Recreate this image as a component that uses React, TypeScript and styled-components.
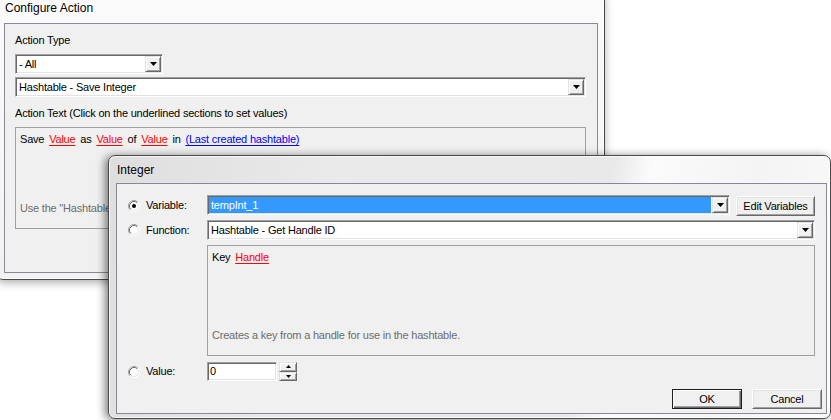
import React from 'react';
import styled, { createGlobalStyle } from 'styled-components';

const GlobalStyle = createGlobalStyle`
  html, body { margin: 0; padding: 0; background: #ffffff; }
  body {
    width: 831px;
    height: 420px;
    overflow: hidden;
    font-family: "Liberation Sans", Arial, sans-serif;
  }
`;

const Desktop = styled.div`
  position: relative;
  width: 831px;
  height: 420px;
  overflow: hidden;
  background: #ffffff;
`;

const Window = styled.div<{ $left: number; $top: number; $width: number; $height: number; $front?: boolean }>`
  position: absolute;
  left: ${p => p.$left}px;
  top: ${p => p.$top}px;
  width: ${p => p.$width}px;
  height: ${p => p.$height}px;
  box-sizing: border-box;
  display: flex;
  flex-direction: column;
  border: 1px solid #4a4a4a;
  border-radius: 7px;
  z-index: ${p => (p.$front ? 2 : 1)};
  background: ${p =>
    p.$front
      ? 'linear-gradient(100deg, #dedede 0%, #eaeaea 30%, #e9e9e9 66%, #fbfbfb 71%, #f4f4f4 85%, #fafafa 100%)'
      : 'linear-gradient(180deg, #fbfbfb 0%, #f6f6f6 60%, #f2f2f2 100%)'};
  box-shadow: ${p =>
    p.$front
      ? '-3px 1px 9px rgba(0,0,0,0.5), inset 0 0 0 1px rgba(255,255,255,0.75)'
      : '0 3px 8px rgba(0,0,0,0.3), inset 0 0 0 1px rgba(255,255,255,0.75)'};
`;

const TitleBar = styled.div<{ $height: number; $padTop: number }>`
  flex: none;
  box-sizing: border-box;
  height: ${p => p.$height}px;
  padding: ${p => p.$padTop}px 0 0 8px;
  font-size: 12px;
  line-height: 15px;
  color: #000;
`;

const Client = styled.div<{ $margin: string; $padding: string }>`
  flex: 1;
  display: flex;
  flex-direction: column;
  box-sizing: border-box;
  margin: ${p => p.$margin};
  padding: ${p => p.$padding};
  background: #f0f0f0;
  border: 1px solid #878a92;
  font-size: 11px;
  letter-spacing: -0.2px;
  color: #000;
`;

const Label = styled.div<{ $mt?: number }>`
  line-height: 13px;
  height: 13px;
  margin-top: ${p => p.$mt ?? 0}px;
  white-space: nowrap;
`;

const Combo = styled.div<{ $width?: number; $mt?: number; $grow?: boolean }>`
  box-sizing: border-box;
  display: flex;
  height: 20px;
  width: ${p => (p.$width ? `${p.$width}px` : 'auto')};
  flex: ${p => (p.$grow ? '1 1 0' : 'none')};
  margin-top: ${p => p.$mt ?? 0}px;
  padding: 1px;
  background: #ffffff;
  border: 1px solid;
  border-color: #a0a0a0 #ffffff #ffffff #a0a0a0;
  box-shadow: inset 1px 1px 0 #696969, inset -1px -1px 0 #e3e3e3;
`;

const ComboText = styled.div<{ $selected?: boolean }>`
  flex: 1;
  line-height: 16px;
  padding-left: 2px;
  margin-right: 1px;
  white-space: nowrap;
  overflow: hidden;
  background: ${p => (p.$selected ? '#3399ff' : 'transparent')};
  color: ${p => (p.$selected ? '#ffffff' : '#000000')};
`;

const RaisedBox = styled.div`
  box-sizing: border-box;
  display: flex;
  align-items: center;
  justify-content: center;
  background: #f0f0f0;
  border: 1px solid;
  border-color: #e3e3e3 #696969 #696969 #e3e3e3;
  box-shadow: inset 1px 1px 0 #ffffff, inset -1px -1px 0 #a0a0a0;
`;

const DropButton = styled(RaisedBox)`
  width: 16px;
  height: 16px;
  flex: none;
`;

const PushButton = styled.div<{ $width: number; $default?: boolean; $mt?: number }>`
  box-sizing: border-box;
  flex: none;
  width: ${p => p.$width}px;
  height: 20px;
  margin-top: ${p => p.$mt ?? 0}px;
  display: flex;
  align-items: center;
  justify-content: center;
  background: #f0f0f0;
  line-height: 13px;
  white-space: nowrap;
  border: 1px solid;
  border-color: ${p => (p.$default ? '#1e1e1e' : '#ffffff #696969 #696969 #ffffff')};
  box-shadow: ${p =>
    p.$default
      ? 'inset 1px 1px 0 #ffffff, inset -1px -1px 0 #696969, inset -2px -2px 0 #a0a0a0'
      : 'inset 1px 1px 0 #e3e3e3, inset -1px -1px 0 #a0a0a0'};
`;

const Panel = styled.div<{ $height: number; $mt?: number }>`
  box-sizing: border-box;
  height: ${p => p.$height}px;
  margin-top: ${p => p.$mt ?? 0}px;
  border: 1px solid #a0a0a0;
  padding: 5px 4px 13px 4px;
  display: flex;
  flex-direction: column;
  justify-content: space-between;
  white-space: nowrap;
  overflow: hidden;
`;

const PhraseLine = styled.div`
  line-height: 13px;
  word-spacing: 2px;
  white-space: pre;
`;

const HelpText = styled.div`
  line-height: 13px;
  color: #6d6d6d;
`;

const Param = styled.span<{ $kind: 'value' | 'preset' }>`
  color: ${p => (p.$kind === 'value' ? '#ff0000' : '#0000ff')};
  text-decoration: underline;
  text-underline-offset: 2px;
  word-spacing: 0;
`;

const Form = styled.div`
  display: flex;
  flex-direction: column;
  margin-right: 7px;
`;

const FormRow = styled.div<{ $height: number; $mt?: number }>`
  display: grid;
  grid-template-columns: 79px 1fr;
  height: ${p => p.$height}px;
  margin-top: ${p => p.$mt ?? 0}px;
`;

const RadioCell = styled.label`
  display: flex;
  align-items: center;
  gap: 6px;
  line-height: 13px;
`;

const ControlCell = styled.div`
  display: flex;
  align-items: flex-start;
  gap: 6px;
`;

const SpinField = styled.div`
  box-sizing: border-box;
  width: 70px;
  height: 19px;
  padding: 1px 2px;
  line-height: 15px;
  background: #ffffff;
  border: 1px solid;
  border-color: #a0a0a0 #ffffff #ffffff #a0a0a0;
  box-shadow: inset 1px 1px 0 #696969, inset -1px -1px 0 #e3e3e3;
`;

const SpinButtons = styled.div`
  display: flex;
  flex-direction: column;
  width: 18px;
  height: 19px;
  margin-left: -4px;
`;

const SpinButton = styled(RaisedBox)`
  flex: 1;
`;

const ButtonBar = styled.div`
  display: flex;
  justify-content: flex-end;
  gap: 10px;
  margin-top: 8px;
`;

const Radio = ({ checked }: { checked?: boolean }) => (
  <svg width="12" height="12" viewBox="0 0 12 12" style={{ flex: 'none' }}>
    <circle cx="6" cy="6" r="5.5" fill="#ffffff" />
    <path d="M2.11 9.89 A5.5 5.5 0 0 1 9.89 2.11" fill="none" stroke="#a0a0a0" strokeWidth="1" />
    <path d="M9.89 2.11 A5.5 5.5 0 0 1 2.11 9.89" fill="none" stroke="#ffffff" strokeWidth="1" />
    <path d="M2.82 9.18 A4.5 4.5 0 0 1 9.18 2.82" fill="none" stroke="#696969" strokeWidth="1" />
    <path d="M9.18 2.82 A4.5 4.5 0 0 1 2.82 9.18" fill="none" stroke="#e3e3e3" strokeWidth="1" />
    {checked && <circle cx="6" cy="6" r="2" fill="#000000" />}
  </svg>
);

const DownArrow = () => (
  <svg width="7" height="4" viewBox="0 0 7 4">
    <path d="M0 0H7L3.5 4Z" fill="#000000" />
  </svg>
);

const TinyArrow = ({ up }: { up?: boolean }) => (
  <svg width="5" height="3" viewBox="0 0 5 3">
    <path d={up ? 'M2.5 0L5 3H0Z' : 'M0 0H5L2.5 3Z'} fill="#000000" />
  </svg>
);

const ComboBox = ({
  text,
  width,
  mt,
  selected,
  grow,
}: {
  text: string;
  width?: number;
  mt?: number;
  selected?: boolean;
  grow?: boolean;
}) => (
  <Combo $width={width} $mt={mt} $grow={grow}>
    <ComboText $selected={selected}>{text}</ComboText>
    <DropButton>
      <DownArrow />
    </DropButton>
  </Combo>
);

export default function App() {
  return (
    <Desktop>
      <GlobalStyle />
      <Window $left={-4} $top={-10} $width={609} $height={290}>
        <TitleBar $height={32} $padTop={10}>Configure Action</TitleBar>
        <Client $margin="0 6px 6px 7px" $padding="10px 11px 0 10px">
          <Label>Action Type</Label>
          <ComboBox text="- All" width={148} mt={7} />
          <ComboBox text="Hashtable - Save Integer" mt={3} />
          <Label $mt={10}>Action Text (Click on the underlined sections to set values)</Label>
          <Panel $height={102} $mt={7}>
            <PhraseLine>
              {'Save '}
              <Param $kind="value">Value</Param>
              {' as '}
              <Param $kind="value">Value</Param>
              {' of '}
              <Param $kind="value">Value</Param>
              {' in '}
              <Param $kind="preset">(Last created hashtable)</Param>
            </PhraseLine>
            <HelpText>Use the "Hashtable - Get Handle ID" function to get a key for a handle.</HelpText>
          </Panel>
        </Client>
      </Window>

      <Window $left={108} $top={155} $width={723} $height={264} $front>
        <TitleBar $height={27} $padTop={7}>Integer</TitleBar>
        <Client $margin="0 3px 4px 7px" $padding="11px 4px 4px 11px">
          <Form>
            <FormRow $height={21}>
              <RadioCell>
                <Radio checked />
                Variable:
              </RadioCell>
              <ControlCell>
                <ComboBox text="tempInt_1" selected grow />
                <PushButton $width={79} $mt={1}>Edit Variables</PushButton>
              </ControlCell>
            </FormRow>
            <FormRow $height={20} $mt={4}>
              <RadioCell>
                <Radio />
                Function:
              </RadioCell>
              <ControlCell>
                <ComboBox text="Hashtable - Get Handle ID" grow />
              </ControlCell>
            </FormRow>
            <FormRow $height={111} $mt={5}>
              <span />
              <Panel $height={111}>
                <PhraseLine>
                  {'Key '}
                  <Param $kind="value">Handle</Param>
                </PhraseLine>
                <HelpText>Creates a key from a handle for use in the hashtable.</HelpText>
              </Panel>
            </FormRow>
            <FormRow $height={19} $mt={6}>
              <RadioCell>
                <Radio />
                Value:
              </RadioCell>
              <ControlCell>
                <SpinField>0</SpinField>
                <SpinButtons>
                  <SpinButton>
                    <TinyArrow up />
                  </SpinButton>
                  <SpinButton>
                    <TinyArrow />
                  </SpinButton>
                </SpinButtons>
              </ControlCell>
            </FormRow>
          </Form>
          <ButtonBar>
            <PushButton $width={70} $default>OK</PushButton>
            <PushButton $width={70}>Cancel</PushButton>
          </ButtonBar>
        </Client>
      </Window>
    </Desktop>
  );
}
